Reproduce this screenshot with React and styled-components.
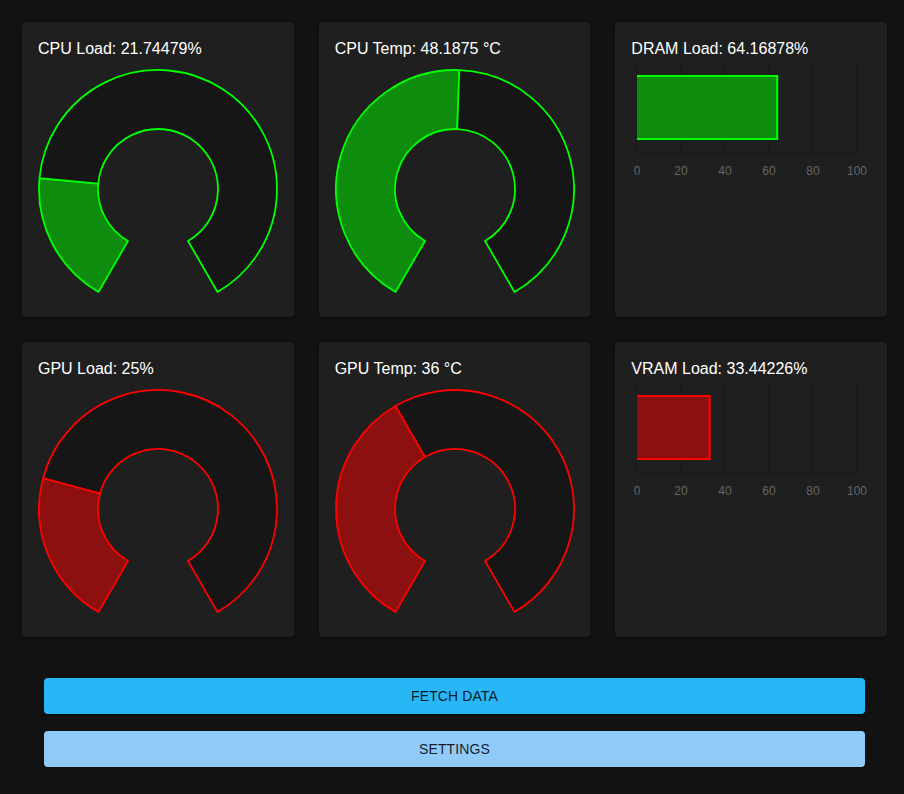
import React from "react";
import styled, { createGlobalStyle } from "styled-components";

const GlobalStyle = createGlobalStyle`
  html, body {
    margin: 0;
    padding: 0;
    background: #121212;
    font-family: "Liberation Sans", Arial, sans-serif;
  }
`;

const green = { fill: "#0e8c0e", stroke: "#00ff00" };
const red = { fill: "#8c1010", stroke: "#ff0000" };

const cards = [
  { kind: "gauge", label: "CPU Load: 21.74479%", fraction: 0.2174479, colors: green },
  { kind: "gauge", label: "CPU Temp: 48.1875 °C", fraction: 0.507, colors: green },
  { kind: "bar", label: "DRAM Load: 64.16878%", value: 64.16878, colors: green },
  { kind: "gauge", label: "GPU Load: 25%", fraction: 0.25, colors: red },
  { kind: "gauge", label: "GPU Temp: 36 °C", fraction: 0.4, colors: red },
  { kind: "bar", label: "VRAM Load: 33.44226%", value: 33.44226, colors: red },
];

export default function App() {
  return (
    <>
      <GlobalStyle />
      <Page>
        <CardGrid>
          {cards.map((c) => (
            <Card key={c.label}>
              <CardTitle $gap={c.kind === "gauge" ? "9px" : "0px"}>{c.label}</CardTitle>
              {c.kind === "gauge" ? (
                <Gauge fraction={c.fraction} colors={c.colors} />
              ) : (
                <HBar value={c.value} colors={c.colors} />
              )}
            </Card>
          ))}
        </CardGrid>
        <ButtonColumn>
          <ActionButton $bg="#29b6f6">Fetch Data</ActionButton>
          <ActionButton $bg="#90caf9">Settings</ActionButton>
        </ButtonColumn>
      </Page>
    </>
  );
}

// doughnut with a 60deg gap at the bottom, angles clockwise from 12 o'clock
function segment(cx, cy, R, r, a0, a1) {
  const pt = (rad, a) => [
    cx + rad * Math.sin((a * Math.PI) / 180),
    cy - rad * Math.cos((a * Math.PI) / 180),
  ];
  const large = a1 - a0 > 180 ? 1 : 0;
  const [x0, y0] = pt(R, a0);
  const [x1, y1] = pt(R, a1);
  const [x2, y2] = pt(r, a1);
  const [x3, y3] = pt(r, a0);
  return `M${x0} ${y0} A${R} ${R} 0 ${large} 1 ${x1} ${y1} L${x2} ${y2} A${r} ${r} 0 ${large} 0 ${x3} ${y3} Z`;
}

function Gauge({ fraction, colors }) {
  const start = 210;
  const mid = start + fraction * 300;
  const end = start + 300;
  return (
    <GaugeSvg width="240" height="232" viewBox="0 0 240 232">
      <path d={segment(120, 120, 119, 60, start, mid)} fill={colors.fill} stroke={colors.stroke} strokeWidth="1.8" strokeLinejoin="round" />
      <path d={segment(120, 120, 119, 60, mid, end)} fill="#161616" stroke={colors.stroke} strokeWidth="1.8" strokeLinejoin="round" />
    </GaugeSvg>
  );
}

function HBar({ value, colors }) {
  const x0 = 6;
  const scale = 2.2;
  const ticks = [0, 20, 40, 60, 80, 100];
  const barEnd = x0 + value * scale;
  return (
    <BarSvg width="239" height="130" viewBox="0 0 239 130">
      {ticks.map((t) => (
        <line key={t} x1={x0 + t * scale} y1="2" x2={x0 + t * scale} y2="93" stroke="rgba(0,0,0,0.18)" strokeWidth="1" />
      ))}
      <line x1={x0} y1="93" x2={x0 + 100 * scale} y2="93" stroke="rgba(0,0,0,0.18)" strokeWidth="1" />
      <rect x={x0} y="15" width={barEnd - x0} height="65" fill={colors.fill} />
      <path d={`M${x0} 16 H${barEnd - 1} V79 H${x0}`} fill="none" stroke={colors.stroke} strokeWidth="2" />
      {ticks.map((t) => (
        <TickLabel key={t} x={x0 + t * scale} y="115" textAnchor="middle">
          {t}
        </TickLabel>
      ))}
    </BarSvg>
  );
}

const Page = styled.div`
  display: flex;
  flex-direction: column;
  min-height: 794px;
`;

const CardGrid = styled.div`
  display: grid;
  grid-template-columns: repeat(3, 1fr);
  grid-auto-rows: 295px;
  gap: 25px;
  padding: 22px 17px 0 22px;
`;

const Card = styled.div`
  background: #1f1f1f;
  border-radius: 4px;
  padding: 16px;
  box-shadow: 0 1px 3px rgba(0, 0, 0, 0.3);
  display: flex;
  flex-direction: column;
  overflow: hidden;
`;

const CardTitle = styled.div`
  color: #ffffff;
  font-size: 16px;
  line-height: 22px;
  margin-bottom: ${(p) => p.$gap};
`;

const GaugeSvg = styled.svg`
  display: block;
`;

const BarSvg = styled.svg`
  display: block;
`;

const TickLabel = styled.text`
  font-family: "Liberation Sans", Arial, sans-serif;
  font-size: 12px;
  fill: #666666;
`;

const ButtonColumn = styled.div`
  display: flex;
  flex-direction: column;
  gap: 17px;
  padding: 41px 39px 28px 44px;
`;

const ActionButton = styled.button`
  height: 36px;
  border: none;
  border-radius: 4px;
  background: ${(p) => p.$bg};
  color: rgba(0, 0, 0, 0.87);
  font-family: "Liberation Sans", Arial, sans-serif;
  font-size: 14px;
  letter-spacing: 0.1px;
  text-transform: uppercase;
  cursor: pointer;
  box-shadow: 0 2px 2px rgba(0, 0, 0, 0.2);
`;
